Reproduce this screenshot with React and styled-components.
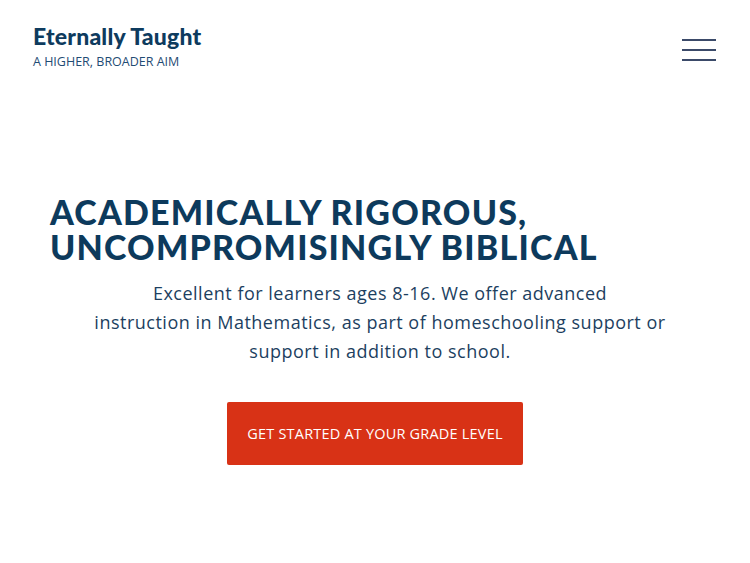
import React from "react";
import styled, { createGlobalStyle } from "styled-components";

const Global = createGlobalStyle`
  html, body { margin: 0; padding: 0; background: #fff; }
  body { font-family: "Open Sans", "Liberation Sans", sans-serif; }
`;

function App() {
  return (
    <Page>
      <Global />
      <Header>
        <Brand>
          <Logo>Eternally Taught</Logo>
          <Tagline>A HIGHER, BROADER AIM</Tagline>
        </Brand>
        <Burger aria-label="Menu">
          <Line />
          <Line />
          <Line />
        </Burger>
      </Header>
      <Hero>
        <Heading>
          ACADEMICALLY RIGOROUS,
          <br />
          UNCOMPROMISINGLY BIBLICAL
        </Heading>
        <Lead>
          Excellent for learners ages 8-16. We offer advanced
          <br />
          instruction in Mathematics, as part of homeschooling support or
          <br />
          support in addition to school.
        </Lead>
        <Cta>GET STARTED AT YOUR GRADE LEVEL</Cta>
      </Hero>
    </Page>
  );
}

const Page = styled.div`
  width: 750px;
  min-height: 563px;
  background: #fff;
`;

const Header = styled.header`
  display: flex;
  justify-content: space-between;
  align-items: flex-start;
  padding: 22px 34px 0 33px;
`;

const Brand = styled.div`
  display: flex;
  flex-direction: column;
`;

const Logo = styled.div`
  font-family: "Lato", "Liberation Sans", sans-serif;
  font-weight: 900;
  font-size: 23px;
  line-height: 28px;
  color: #0e3b5e;
  letter-spacing: 0.2px;
`;

const Tagline = styled.div`
  font-family: "Open Sans", "Liberation Sans", sans-serif;
  font-size: 12.5px;
  line-height: 16px;
  margin-top: 4px;
  color: #1f4c74;
`;

const Burger = styled.button`
  display: flex;
  flex-direction: column;
  gap: 8px;
  padding: 0;
  margin-top: 17px;
  border: 0;
  background: none;
`;

const Line = styled.span`
  display: block;
  width: 34px;
  height: 2px;
  background: #3b4a69;
`;

const Hero = styled.section`
  display: flex;
  flex-direction: column;
  padding: 124px 40px 0 50px;
`;

const Heading = styled.h1`
  margin: 0;
  font-family: "Lato", "Liberation Sans", sans-serif;
  font-weight: 900;
  font-size: 34px;
  line-height: 35px;
  letter-spacing: 1.2px;
  color: #0d3a5c;
`;

const Lead = styled.p`
  align-self: center;
  width: 620px;
  margin: 15px 0 0;
  text-align: center;
  font-family: "Open Sans", "Liberation Sans", sans-serif;
  font-size: 18px;
  letter-spacing: 0.5px;
  line-height: 29px;
  color: #1d3f5f;
`;

const Cta = styled.a`
  align-self: center;
  margin: 36px 0 0 -10px;
  width: 296px;
  height: 63px;
  box-sizing: border-box;
  display: flex;
  align-items: center;
  justify-content: center;
  background: #d83216;
  border-radius: 2px;
  color: #fff;
  font-family: "Open Sans", "Liberation Sans", sans-serif;
  font-size: 14.5px;
  letter-spacing: 0.2px;
  text-decoration: none;
`;

export default App;
